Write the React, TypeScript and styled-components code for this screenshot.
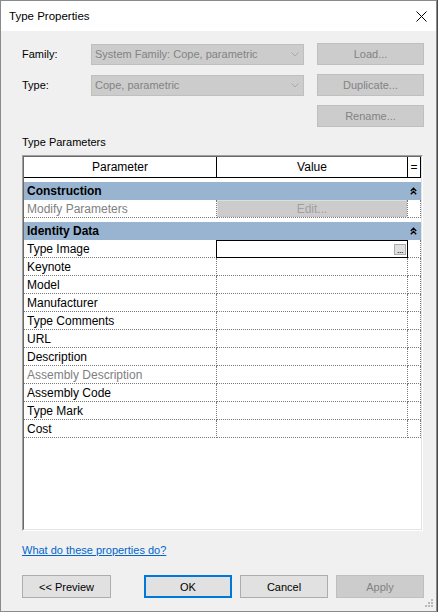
import React from "react";
import styled, { createGlobalStyle } from "styled-components";

const GlobalStyle = createGlobalStyle`
  html, body {
    margin: 0;
    padding: 0;
    background: #4a4a4a;
  }
  body {
    font-family: "Liberation Sans", Arial, sans-serif;
  }
`;

const Window = styled.div`
  position: relative;
  box-sizing: border-box;
  width: 437px;
  height: 612px;
  border: 1px solid #8a8a8a;
  background: #f0f0f0;
  display: flex;
  flex-direction: column;
  font-size: 11px;
  color: #000;
`;

const TitleBar = styled.div`
  height: 30px;
  background: #fff;
  display: flex;
  align-items: center;
  justify-content: space-between;
  padding: 0 9px 0 8px;
  font-size: 11.5px;
`;

const Body = styled.div`
  flex: 1;
  display: flex;
  flex-direction: column;
  padding: 12px 12px 0 21px;
`;

const TopGrid = styled.div`
  display: grid;
  grid-template-columns: 69px 226px 107px;
  grid-auto-rows: 22px;
  row-gap: 9px;
  align-items: center;
`;

const Label = styled.span`
  font-size: 11px;
  line-height: 14px;
`;

const Combo = styled.div`
  box-sizing: border-box;
  width: 213px;
  height: 21px;
  background: #cccccc;
  border: 1px solid #bfbfbf;
  color: #838383;
  display: flex;
  align-items: center;
  justify-content: space-between;
  padding: 0 4px 0 3px;
  font-size: 11px;
`;

const Button = styled.div<{ $disabled?: boolean; $default?: boolean; $w?: number }>`
  box-sizing: border-box;
  width: ${(p) => (p.$w ? `${p.$w}px` : "100%")};
  height: ${(p) => (p.$w ? "23px" : "22px")};
  display: flex;
  align-items: center;
  justify-content: center;
  font-size: 11px;
  background: ${(p) => (p.$disabled ? "#cccccc" : "#e1e1e1")};
  border: ${(p) => (p.$default ? "2px solid #0078d7" : p.$disabled ? "1px solid #bfbfbf" : "1px solid #adadad")};
  color: ${(p) => (p.$disabled ? "#838383" : "#000")};
`;

const SectionLabel = styled.div`
  margin: 8px 0 6px 0;
  line-height: 14px;
  font-size: 11px;
`;

const TableOuter = styled.div`
  box-sizing: border-box;
  height: 376px;
  width: 401px;
  border: 1px solid;
  border-color: #a0a0a0 #ffffff #ffffff #a0a0a0;
`;

const TableInner = styled.div`
  box-sizing: border-box;
  height: 100%;
  border: 1px solid;
  border-color: #696969 #e3e3e3 #e3e3e3 #696969;
  background: #fff;
  font-size: 12px;
`;

const GridRow = styled.div`
  display: grid;
  grid-template-columns: 193px 191px 13px;
`;

const HeaderCell = styled.div`
  box-sizing: border-box;
  height: 21px;
  display: flex;
  align-items: center;
  justify-content: center;
  border-right: 1px solid #000;
  border-bottom: 1px solid #000;
  font-size: 12px;
`;

const GroupRow = styled.div`
  box-sizing: border-box;
  height: 22px;
  border-top: 4px solid #fff;
  background: #99b4d1;
  display: flex;
  align-items: center;
  justify-content: space-between;
  padding-left: 3px;
  font-weight: bold;
  font-size: 12px;
`;

const Collapse = styled.span`
  width: 13px;
  display: flex;
  padding-left: 2px;
  box-sizing: border-box;
`;

const Cell = styled.div<{ $dim?: boolean; $selected?: boolean }>`
  box-sizing: border-box;
  height: 18px;
  border-right: 1px dotted #7a7a7a;
  border-bottom: 1px dotted #7a7a7a;
  padding-left: 3px;
  display: flex;
  align-items: center;
  color: ${(p) => (p.$dim ? "#808080" : "#000")};
  white-space: nowrap;
  overflow: hidden;
  ${(p) =>
    p.$selected &&
    `
    border: 1px solid #000;
    margin-left: -1px;
    justify-content: flex-end;
    padding-right: 1px;
  `}
`;

const EditButton = styled.div`
  box-sizing: border-box;
  flex: 1;
  height: 100%;
  margin-left: -3px;
  background: #cccccc;
  border: 1px solid;
  border-color: #dedede #c4c4c4 #c4c4c4 #dedede;
  color: #a0a0a0;
  display: flex;
  align-items: center;
  justify-content: center;
`;

const Ellipsis = styled.div`
  box-sizing: border-box;
  width: 12px;
  height: 11px;
  background: #e1e1e1;
  border: 1px solid #adadad;
  font-size: 9px;
  line-height: 10px;
  text-align: center;
  letter-spacing: -0.5px;
`;

const Link = styled.a`
  margin-top: 12px;
  line-height: 14px;
  font-size: 11px;
  color: #0066cc;
  text-decoration: underline;
  align-self: flex-start;
`;

const Footer = styled.div`
  margin-top: 18px;
  display: flex;
  justify-content: space-between;
`;

const ButtonGroup = styled.div`
  display: flex;
  gap: 8px;
`;

const Grip = styled.svg`
  position: absolute;
  right: 2px;
  bottom: 3px;
`;

const Chevron = () => (
  <svg width="8" height="5" viewBox="0 0 8 5">
    <path d="M0.5 0.5 L4 4 L7.5 0.5" fill="none" stroke="#a8a8a8" strokeWidth="1" />
  </svg>
);

const DoubleUp = () => (
  <svg width="7" height="8" viewBox="0 0 7 8">
    <path d="M0.8 4 L3.5 1.3 L6.2 4 M0.8 7.2 L3.5 4.5 L6.2 7.2" fill="none" stroke="#000" strokeWidth="1.4" />
  </svg>
);

type Param = { name: string; dim?: boolean; selected?: boolean; edit?: boolean };

const identity: Param[] = [
  { name: "Type Image", selected: true },
  { name: "Keynote" },
  { name: "Model" },
  { name: "Manufacturer" },
  { name: "Type Comments" },
  { name: "URL" },
  { name: "Description" },
  { name: "Assembly Description", dim: true },
  { name: "Assembly Code" },
  { name: "Type Mark" },
  { name: "Cost" },
];

const ParamRow = ({ p }: { p: Param }) => (
  <GridRow>
    <Cell $dim={p.dim}>{p.name}</Cell>
    <Cell $selected={p.selected}>
      {p.edit && <EditButton>Edit...</EditButton>}
      {p.selected && <Ellipsis>...</Ellipsis>}
    </Cell>
    <Cell />
  </GridRow>
);

const Group = ({ title }: { title: string }) => (
  <GroupRow>
    <span>{title}</span>
    <Collapse>
      <DoubleUp />
    </Collapse>
  </GroupRow>
);

export default function App() {
  return (
    <>
      <GlobalStyle />
      <Window>
        <TitleBar>
          <span>Type Properties</span>
          <svg width="11" height="11" viewBox="0 0 11 11">
            <path d="M0.5 0.5 L10.5 10.5 M10.5 0.5 L0.5 10.5" stroke="#000" strokeWidth="1" />
          </svg>
        </TitleBar>
        <Body>
          <TopGrid>
            <Label>Family:</Label>
            <Combo>
              <span>System Family: Cope, parametric</span>
              <Chevron />
            </Combo>
            <Button $disabled>Load...</Button>
            <Label>Type:</Label>
            <Combo>
              <span>Cope, parametric</span>
              <Chevron />
            </Combo>
            <Button $disabled>Duplicate...</Button>
            <span />
            <span />
            <Button $disabled>Rename...</Button>
          </TopGrid>

          <SectionLabel>Type Parameters</SectionLabel>
          <TableOuter>
            <TableInner>
              <GridRow>
                <HeaderCell>Parameter</HeaderCell>
                <HeaderCell>Value</HeaderCell>
                <HeaderCell>=</HeaderCell>
              </GridRow>
              <Group title="Construction" />
              <ParamRow p={{ name: "Modify Parameters", dim: true, edit: true }} />
              <Group title="Identity Data" />
              {identity.map((p) => (
                <ParamRow key={p.name} p={p} />
              ))}
            </TableInner>
          </TableOuter>

          <Link>What do these properties do?</Link>

          <Footer>
            <Button $w={89}>&lt;&lt; Preview</Button>
            <ButtonGroup>
              <Button $w={88} $default>OK</Button>
              <Button $w={88}>Cancel</Button>
              <Button $w={88} $disabled>Apply</Button>
            </ButtonGroup>
          </Footer>
        </Body>
        <Grip width="9" height="9" viewBox="0 0 9 9">
          <g fill="#b8b8b8">
            <rect x="6" y="0" width="2" height="2" />
            <rect x="3" y="3" width="2" height="2" />
            <rect x="6" y="3" width="2" height="2" />
            <rect x="0" y="6" width="2" height="2" />
            <rect x="3" y="6" width="2" height="2" />
            <rect x="6" y="6" width="2" height="2" />
          </g>
        </Grip>
      </Window>
    </>
  );
}
